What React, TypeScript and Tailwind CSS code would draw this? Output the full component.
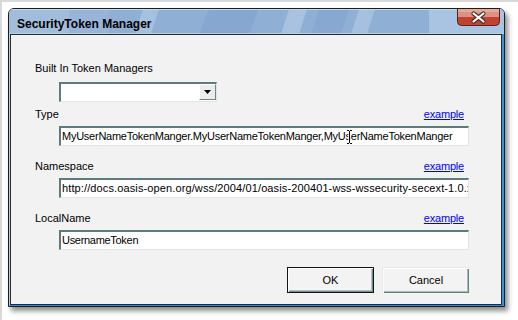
const fields = [
  {
    label: 'Type',
    value: 'MyUserNameTokenManger.MyUserNameTokenManger,MyUserNameTokenManger',
    gap: 'mt-[6px]',
    track: 'tracking-[-0.25px]',
    cursor: true
  },
  {
    label: 'Namespace',
    value:
      'http://docs.oasis-open.org/wss/2004/01/oasis-200401-wss-wssecurity-secext-1.0.xsd',
    gap: 'mt-[14px]',
    track: 'tracking-[0.12px]',
    cursor: false
  },
  {
    label: 'LocalName',
    value: 'UsernameToken',
    gap: 'mt-[14px]',
    track: 'tracking-[-0.3px]',
    cursor: false
  }
]

// glass texture of the title bar, solid bands only
function TitleGlass() {
  return (
    <svg
      className="absolute left-0 top-0"
      width="495"
      height="25"
      viewBox="0 0 495 25"
    >
      <rect x="0" y="0" width="495" height="25" fill="#8fafd5" />
      <rect x="0" y="0" width="60" height="25" fill="#a2bcdc" />
      <rect x="60" y="0" width="40" height="25" fill="#98b5d9" />
      <rect x="420" y="0" width="75" height="25" fill="#a9c3e2" />
      <polygon points="134,0 150,0 142,25 126,25" fill="#a6c0df" />
      <polygon points="200,0 250,0 240,25 190,25" fill="#86a8d0" />
      <polygon points="280,0 298,0 290,25 272,25" fill="#a8c2e0" />
      <polygon points="350,0 366,0 358,25 342,25" fill="#a6c0df" />
      <polygon points="310,0 340,0 332,25 302,25" fill="#87a9d1" />
      <rect x="0" y="0" width="495" height="1" fill="#c9d9ec" />
      <rect x="0" y="24" width="495" height="1" fill="#b8cde6" />
    </svg>
  )
}

function CloseButton() {
  return (
    <svg
      className="absolute right-[4px] top-0"
      width="43"
      height="17"
      viewBox="0 0 43 17"
    >
      <path
        d="M0.5 0 V12.5 Q0.5 16.5 4.5 16.5 H38.5 Q42.5 16.5 42.5 12.5 V0 Z"
        fill="#c1432f"
        stroke="#5e2118"
      />
      <rect x="1" y="0" width="41" height="8" fill="#dc9283" />
      <rect x="1" y="0" width="41" height="3" fill="#e6aa9d" />
      <path
        d="M16.5 4.5 L26.5 12.5 M26.5 4.5 L16.5 12.5"
        stroke="#4a2a26"
        strokeWidth="4.2"
        strokeLinecap="round"
        fill="none"
      />
      <path
        d="M16.5 4.5 L26.5 12.5 M26.5 4.5 L16.5 12.5"
        stroke="#ffffff"
        strokeWidth="2.2"
        strokeLinecap="round"
        fill="none"
      />
    </svg>
  )
}

function IBeam() {
  return (
    <svg
      className="absolute left-[285px] top-[1px]"
      width="7"
      height="16"
      viewBox="0 0 7 16"
    >
      <path
        d="M1 1.5 H3 M4 1.5 H6 M3.5 2 V14 M1 14.5 H3 M4 14.5 H6"
        stroke="#ffffff"
        strokeWidth="2.4"
        fill="none"
      />
      <path
        d="M1 1.5 H3 M4 1.5 H6 M3.5 2 V14 M1 14.5 H3 M4 14.5 H6"
        stroke="#000000"
        strokeWidth="1"
        fill="none"
      />
    </svg>
  )
}

function Field({
  label,
  value,
  gap,
  track,
  cursor
}: {
  label: string
  value: string
  gap: string
  track: string
  cursor: boolean
}) {
  return (
    <>
      <div className={`${gap} flex items-start justify-between pr-[5px]`}>
        <span className="text-[11px] leading-[13px] text-black">{label}</span>
        <a className="cursor-pointer text-[11px] leading-[13px] tracking-[-0.2px] text-[#0000ff] underline">
          example
        </a>
      </div>
      <div
        className={`relative ml-6 mt-[5px] flex h-[20px] min-w-0 items-center overflow-hidden whitespace-nowrap border-b border-l-2 border-r border-t-2 border-b-[#e4e4e4] border-l-[#5d7b7b] border-r-[#e4e4e4] border-t-[#5d7b7b] bg-white pl-px text-[11px] leading-[13px] text-black ${track}`}
      >
        {value}
        {cursor && <IBeam />}
      </div>
    </>
  )
}

function App() {
  return (
    <div className="h-[320px] w-[518px] overflow-hidden border-l-2 border-t-2 border-[#d9d9d9] bg-white pl-[6px] pt-[6px] font-['Liberation_Sans',Arial,sans-serif]">
      <div className="flex h-[299px] w-[497px] flex-col overflow-hidden rounded-t-[6px] border border-[#1e1e1e] bg-[#8fafd5] shadow-[3px_4px_5px_rgba(0,0,0,0.45)]">
        <div className="relative h-[25px] shrink-0 bg-[#8fafd5] pl-2 pt-2 text-[12px] font-bold leading-[14px] text-black">
          <TitleGlass />
          <span className="relative">SecurityToken Manager</span>
          <CloseButton />
        </div>
        <div className="flex min-w-0 flex-1 border-b border-l border-r-2 border-b-[#2a8ce2] border-l-[#b9d1ec] border-r-[#3393e6]">
          <div className="flex min-w-0 flex-1 flex-col border border-[#2a2a2a] bg-[#f2f2f2] pl-6 pr-8">
            <span className="mt-[27px] text-[11px] leading-[13px] text-black">
              Built In Token Managers
            </span>
            <div className="ml-6 mt-[7px] flex h-[20px] w-[158px] border-b border-l-2 border-r border-t-2 border-b-[#e4e4e4] border-l-[#5d7b7b] border-r-[#e4e4e4] border-t-[#5d7b7b] bg-white">
              <div className="flex-1" />
              <div className="flex h-[16px] w-[17px] items-center justify-center border-b border-l border-r border-t border-b-[#6b8787] border-l-[#ffffff] border-r-[#6b8787] border-t-[#ffffff] bg-[#ececec]">
                <svg width="7" height="4" viewBox="0 0 7 4">
                  <path d="M0 0 H7 L3.5 4 Z" fill="#000000" />
                </svg>
              </div>
            </div>
            {fields.map((f) => (
              <Field key={f.label} {...f} />
            ))}
            <div className="mt-[17px] flex justify-end gap-2">
              <button className="flex h-[26px] w-[87px] items-center justify-center border border-[#141414] bg-[#f3f3f3] text-[11px] text-black shadow-[inset_1px_1px_0_#ffffff,inset_-1px_-1px_0_#6f8c8c,inset_-2px_-2px_0_#b3c2c2]">
                OK
              </button>
              <button className="flex h-[26px] w-[87px] items-center justify-center border-l border-t border-l-[#e6e6e6] border-t-[#e6e6e6] bg-[#f3f3f3] text-[11px] text-black shadow-[inset_1px_1px_0_#ffffff,inset_-1px_-1px_0_#61807f,inset_-2px_-2px_0_#a9baba]">
                Cancel
              </button>
            </div>
          </div>
        </div>
      </div>
    </div>
  )
}

export default App
